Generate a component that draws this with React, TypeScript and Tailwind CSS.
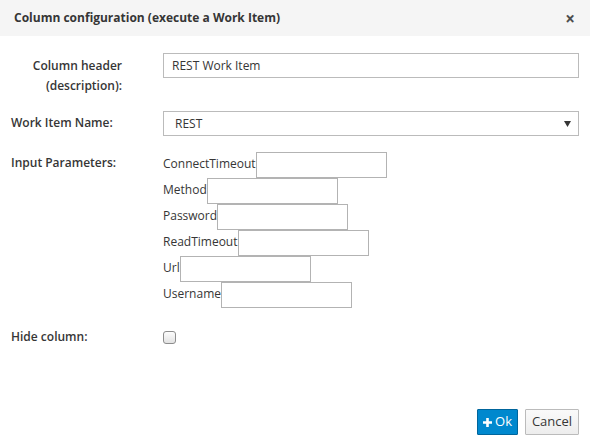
import React from "react";

const FONT = { fontFamily: '"Open Sans", "Noto Sans", sans-serif' };

const params = ["ConnectTimeout", "Method", "Password", "ReadTimeout", "Url", "Username"];

function ParamRow({ name }: { name: string }) {
  return (
    <div className="flex items-center h-[26px]">
      <span className="leading-[20px] mb-[3px]">{name}</span>
      <div className="w-[131px] h-[26px] border border-[#b3b3b3] bg-white" />
    </div>
  );
}

export default function App() {
  return (
    <div className="w-[590px] h-[446px] bg-white flex flex-col text-[12px] text-[#363636]" style={FONT}>
      {/* Header */}
      <div className="h-[36px] bg-[#f5f5f5] flex items-center justify-between pl-[14px] pr-[15px]">
        <h4 className="font-bold text-[12px] leading-none">Column configuration (execute a Work Item)</h4>
        <button className="text-[17px] font-bold text-[#4d4d4d] leading-none">×</button>
      </div>

      {/* Body */}
      <div className="flex-1 pl-[11px] pr-[11px] pt-[17px]">
        <div className="flex">
          <label className="w-[111px] text-right font-semibold leading-[20px] pt-[3px]">
            Column header
            <br />
            (description):
          </label>
          <div className="ml-[41px] flex-1">
            <div className="h-[25px] border border-[#bbb] flex items-center pl-[8px]">REST Work Item</div>
          </div>
        </div>

        <div className="flex mt-[15px]">
          <label className="w-[111px] font-semibold leading-[20px] pt-[2px]">Work Item Name:</label>
          <div className="ml-[41px] flex-1">
            <div className="h-[25px] border border-[#bbb] flex items-center justify-between pl-[11px] pr-[7px]">
              <span>REST</span>
              <svg width="7" height="6" viewBox="0 0 7 6">
                <path d="M0 0h7L3.5 6z" fill="#363636" />
              </svg>
            </div>
          </div>
        </div>

        <div className="flex mt-[16px]">
          <label className="w-[111px] font-semibold leading-[20px] pt-[1px]">Input Parameters:</label>
          <div className="ml-[41px] flex flex-col">
            {params.map((p) => (
              <ParamRow key={p} name={p} />
            ))}
          </div>
        </div>

        <div className="flex mt-[19px] items-center">
          <label className="w-[111px] font-semibold leading-[20px]">Hide column:</label>
          <div className="ml-[41px]">
            <div className="w-[13px] h-[13px] rounded-[3px] border border-[#8d8d8d] bg-gradient-to-b from-[#fdfdfd] to-[#e2e2e2]" />
          </div>
        </div>
      </div>

      {/* Footer */}
      <div className="flex justify-end gap-[7px] pr-[11px] pb-[11px]">
        <button className="h-[26px] w-[41px] flex items-center justify-center gap-[3px] bg-[#0088ce] border border-[#00659c] rounded-[1px] text-white text-[13px]">
          <svg width="9" height="9" viewBox="0 0 9 9">
            <path d="M3.2 0h2.6v3.2H9v2.6H5.8V9H3.2V5.8H0V3.2h3.2z" fill="#fff" />
          </svg>
          <span>Ok</span>
        </button>
        <button className="h-[26px] w-[54px] flex items-center justify-center bg-gradient-to-b from-[#fafafa] to-[#ededed] border border-[#bbb] rounded-[1px] text-[#363636] text-[13px]">
          Cancel
        </button>
      </div>
    </div>
  );
}
